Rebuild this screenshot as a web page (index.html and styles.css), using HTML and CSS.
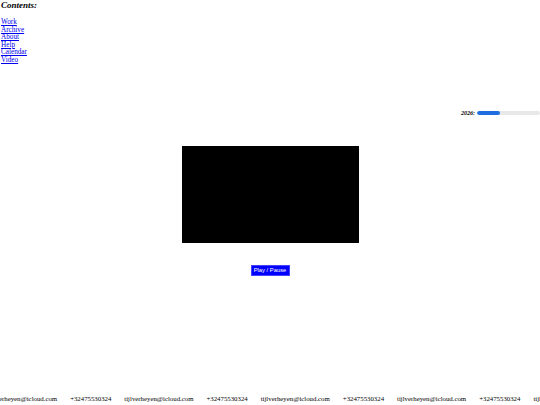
FILE: index.html
```html
<!DOCTYPE html>
<html>
<head>
<meta charset="utf-8">
<link rel="stylesheet" href="styles.css">
</head>
<body>
<div class="page">
  <header class="contents">
    <h1 class="contents-title">Contents:</h1>
    <nav class="nav">
      <a href="#">Work</a>
      <a href="#">Archive</a>
      <a href="#">About</a>
      <a href="#">Help</a>
      <a href="#">Calendar</a>
      <a href="#">Video</a>
    </nav>
  </header>
  <div class="year">
    <span class="year-label">2026:</span>
    <div class="bar"><div class="bar-fill" style="width:37%"></div></div>
  </div>
  <main class="stage">
    <div class="video"></div>
    <button class="play">Play / Pause</button>
  </main>
  <footer class="ticker">
    <div class="track">
      <span>tijlverheyen@icloud.com</span><span>+32475530324</span>
      <span>tijlverheyen@icloud.com</span><span>+32475530324</span>
      <span>tijlverheyen@icloud.com</span><span>+32475530324</span>
      <span>tijlverheyen@icloud.com</span><span>+32475530324</span>
      <span>tijlverheyen@icloud.com</span>
    </div>
  </footer>
</div>
</body>
</html>
```
FILE: styles.css
```css
html, body {
  margin: 0;
  padding: 0;
  background: #fff;
}
body {
  font-family: "Liberation Serif", "Times New Roman", serif;
  color: #000;
}
.page {
  height: 405px;
  display: flex;
  flex-direction: column;
  overflow: hidden;
}
.contents {
  padding-left: 1px;
}
.contents-title {
  margin: 0;
  font-size: 9px;
  line-height: 10px;
  font-weight: bold;
  font-style: italic;
}
.nav {
  display: flex;
  flex-direction: column;
  margin-top: 9px;
}
.nav a {
  font-size: 7.2px;
  line-height: 7.5px;
  color: #0000ee;
  text-decoration: underline;
}
.year {
  display: flex;
  justify-content: flex-end;
  align-items: center;
  gap: 2px;
  margin-top: 46px;
}
.year-label {
  font-size: 6px;
  font-weight: bold;
  font-style: italic;
}
.bar {
  width: 63px;
  height: 4px;
  background: #e8e8e8;
  border-radius: 2px;
  overflow: hidden;
}
.bar-fill {
  height: 100%;
  background: #1f6fe0;
  border-radius: 2px;
}
.stage {
  display: flex;
  flex-direction: column;
  align-items: center;
  margin-top: 30px;
}
.video {
  width: 177px;
  height: 97px;
  background: #000;
  margin-left: 1px;
}
.play {
  margin-top: 22px;
  width: 39px;
  height: 11px;
  padding: 0;
  background: #0000ff;
  color: #fff;
  border: 1px solid #4444ff;
  font-family: "Liberation Sans", Arial, sans-serif;
  font-size: 5.8px;
  line-height: 9px;
  white-space: nowrap;
}
.ticker {
  margin-top: auto;
  padding-bottom: 2px;
  overflow: hidden;
  white-space: nowrap;
}
.track {
  display: flex;
  gap: 13px;
  margin-left: -12px;
  font-size: 6.8px;
  line-height: 9px;
}
```
